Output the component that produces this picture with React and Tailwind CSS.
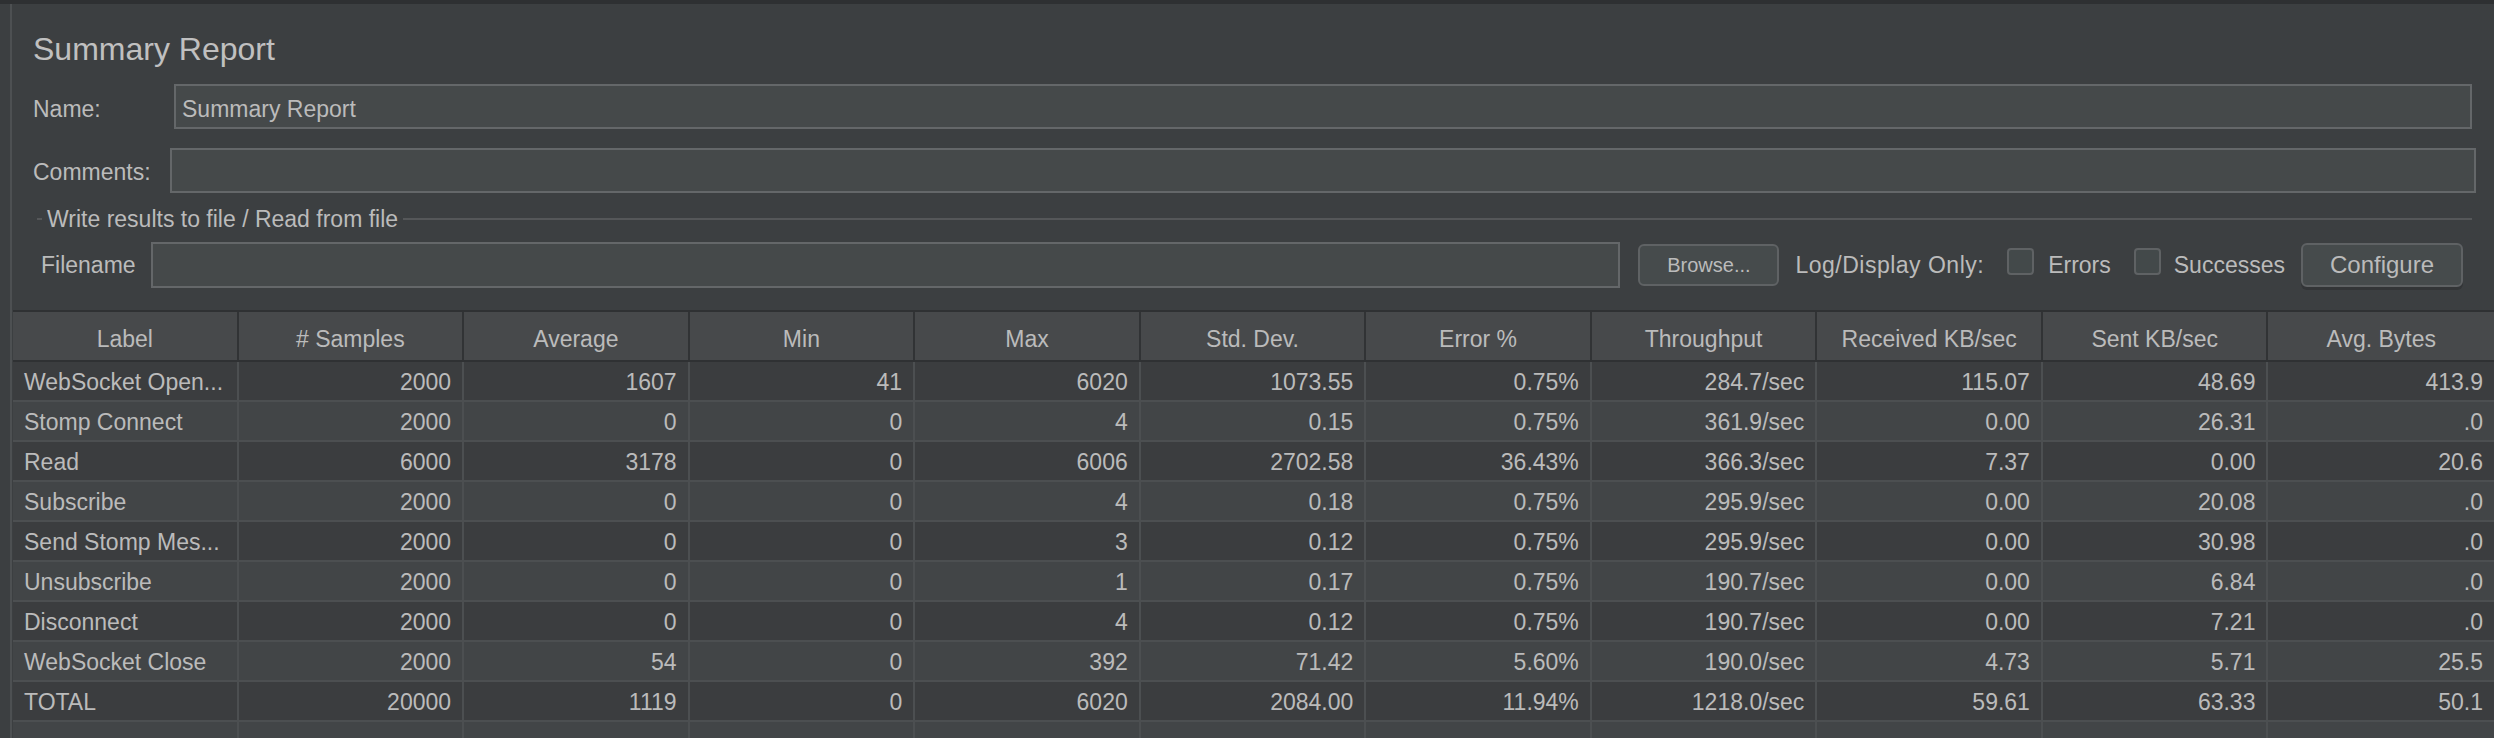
import React from "react";

const columns = [
  "Label",
  "# Samples",
  "Average",
  "Min",
  "Max",
  "Std. Dev.",
  "Error %",
  "Throughput",
  "Received KB/sec",
  "Sent KB/sec",
  "Avg. Bytes",
];

const rows = [
  ["WebSocket Open...", "2000", "1607", "41", "6020", "1073.55", "0.75%", "284.7/sec", "115.07", "48.69", "413.9"],
  ["Stomp Connect", "2000", "0", "0", "4", "0.15", "0.75%", "361.9/sec", "0.00", "26.31", ".0"],
  ["Read", "6000", "3178", "0", "6006", "2702.58", "36.43%", "366.3/sec", "7.37", "0.00", "20.6"],
  ["Subscribe", "2000", "0", "0", "4", "0.18", "0.75%", "295.9/sec", "0.00", "20.08", ".0"],
  ["Send Stomp Mes...", "2000", "0", "0", "3", "0.12", "0.75%", "295.9/sec", "0.00", "30.98", ".0"],
  ["Unsubscribe", "2000", "0", "0", "1", "0.17", "0.75%", "190.7/sec", "0.00", "6.84", ".0"],
  ["Disconnect", "2000", "0", "0", "4", "0.12", "0.75%", "190.7/sec", "0.00", "7.21", ".0"],
  ["WebSocket Close", "2000", "54", "0", "392", "71.42", "5.60%", "190.0/sec", "4.73", "5.71", "25.5"],
  ["TOTAL", "20000", "1119", "0", "6020", "2084.00", "11.94%", "1218.0/sec", "59.61", "63.33", "50.1"],
  ["", "", "", "", "", "", "", "", "", "", ""],
];

const Checkbox = () => (
  <div className="self-start mt-[6px] w-[27px] h-[27px] rounded-[4px] border-2 border-[#5f6264] bg-[#43494a]" />
);

const App = () => {
  return (
    <div
      className="w-[2494px] h-[738px] overflow-hidden bg-[#3c3f41] text-[#bbbbbb] border-t-4 border-[#2e3032]"
      style={{ fontFamily: '"Liberation Sans", Arial, sans-serif' }}
    >
      <div className="pl-[10px] h-full">
        <div className="h-full border-l-2 border-[#4d5052] flex flex-col">
          {/* title */}
          <div className="shrink-0 mt-[27px] pl-[21px] h-[36px] leading-[36px] text-[32px] text-[#c0c0c0]">
            Summary Report
          </div>

          {/* name */}
          <div className="shrink-0 mt-[17px] pl-[21px] pr-[22px] h-[45px] flex items-center text-[23px]">
            <span className="w-[141px] pt-[5px]">Name:</span>
            <div className="flex-1 h-full flex items-center border-2 border-[#646769] bg-[#45494a] px-[6px] pt-[5px]">
              Summary Report
            </div>
          </div>

          {/* comments */}
          <div className="shrink-0 mt-[19px] pl-[21px] pr-[18px] h-[45px] flex items-center text-[23px]">
            <span className="w-[137px] pt-[3px]">Comments:</span>
            <div className="flex-1 h-full border-2 border-[#646769] bg-[#45494a]" />
          </div>

          {/* file section */}
          <div className="shrink-0 mt-[13px] pl-[25px] pr-[22px] h-[26px] flex items-center text-[23px] leading-[26px]">
            <div className="w-[5px] h-[2px] bg-[#555759]" />
            <span className="px-[5px]">Write results to file / Read from file</span>
            <div className="flex-1 h-[2px] bg-[#555759]" />
          </div>

          <div className="shrink-0 mt-[10px] pl-[29px] pr-[31px] h-[46px] flex items-center text-[23px]">
            <span className="w-[110px]">Filename</span>
            <div className="flex-1 h-full border-2 border-[#646769] bg-[#45494a]" />
            <button className="ml-[18px] w-[141px] h-[42px] rounded-[6px] border-2 border-[#5f6264] bg-[#464b4c] text-[20px] text-[#bbbbbb]">
              Browse...
            </button>
            <span className="ml-[16px] tracking-[0.5px]">Log/Display Only:</span>
            <div className="ml-[23px] flex items-center h-full">
              <Checkbox />
            </div>
            <span className="ml-[14px]">Errors</span>
            <div className="ml-[23px] flex items-center h-full">
              <Checkbox />
            </div>
            <span className="ml-[13px]">Successes</span>
            <button className="ml-[16px] w-[162px] h-[44px] rounded-[6px] border-2 border-[#5f6264] bg-[#464b4c] text-[24px] text-[#bbbbbb] shadow-[0_3px_0_#333537]">
              Configure
            </button>
          </div>

          {/* table */}
          <div className="shrink-0 mt-[22px] ml-[1px] text-[23px]">
            <div className="grid grid-cols-11 h-[52px] border-t-2 border-b-2 border-[#2f3133] bg-[#47494b]">
              {columns.map((col, i) => (
                <div
                  key={col}
                  className={`flex items-center justify-center pt-[6px] ${
                    i < columns.length - 1 ? "border-r-2 border-[#313335]" : ""
                  }`}
                >
                  {col}
                </div>
              ))}
            </div>
            {rows.map((row, r) => (
              <div
                key={r}
                className={`grid grid-cols-11 h-[40px] border-b-2 border-[#4c4f51] ${
                  r % 2 === 0 ? "bg-[#3b3d3f]" : "bg-[#424547]"
                }`}
              >
                {row.map((cell, i) => (
                  <div
                    key={i}
                    className={`flex items-center whitespace-nowrap overflow-hidden pt-[3px] ${
                      i === 0 ? "pl-[11px]" : "justify-end pr-[11px]"
                    } ${i < row.length - 1 ? "border-r-2 border-[#4c4f51]" : ""}`}
                  >
                    {cell}
                  </div>
                ))}
              </div>
            ))}
          </div>
        </div>
      </div>
    </div>
  );
};

export default App;
